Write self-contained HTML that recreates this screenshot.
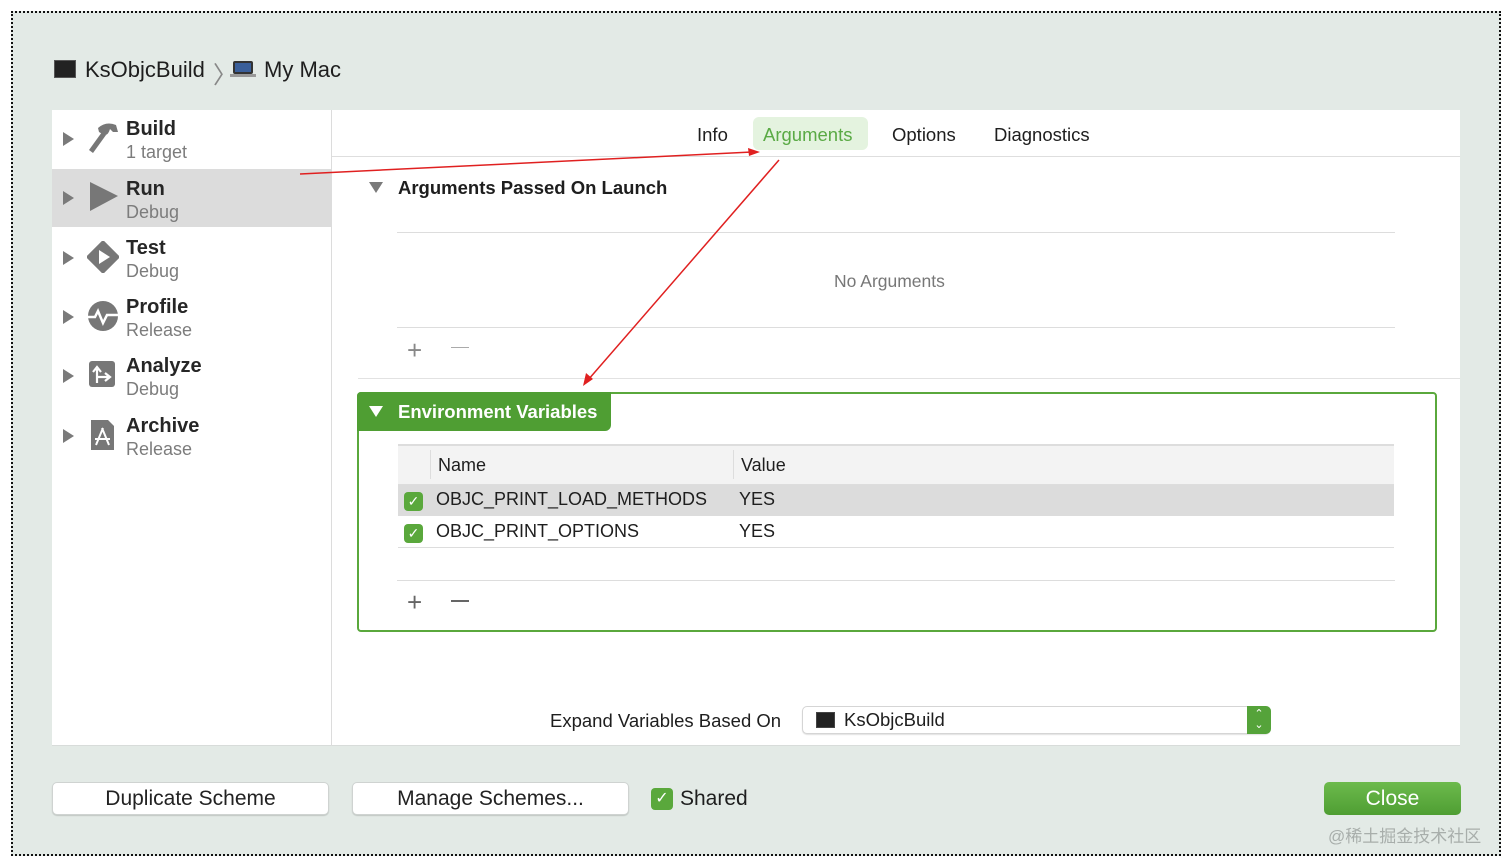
<!DOCTYPE html>
<html><head><meta charset="utf-8">
<style>
*{margin:0;padding:0;box-sizing:border-box}
body{width:1512px;height:866px;background:#fff;font-family:"Liberation Sans",sans-serif;position:relative;overflow:hidden;color:#222}
.a{position:absolute}
#outer{left:11px;top:11px;width:1490px;height:845px;border:2px dotted #111;background:#e3eae6}
.t{font-size:19px;color:#1e1e1e;white-space:nowrap}
.side-title{font-size:20px;font-weight:bold;color:#262626}
.side-sub{font-size:18px;color:#7c7c7c}
.tri{width:0;height:0;border-top:7px solid transparent;border-bottom:7px solid transparent;border-left:11px solid #7a7a7a}
.btn{background:#fff;border:1px solid #cfd3d1;border-radius:5px;box-shadow:0 1px 1px rgba(0,0,0,.15);font-size:21px;text-align:center;color:#222}
.chk{width:19px;height:19px;border-radius:4px;background:#5aa83c;color:#fff;font-size:14px;text-align:center;line-height:19px}
</style></head><body>
<div class="a" id="outer"></div>
<!-- header -->
<div class="a" style="left:54px;top:60px;width:22px;height:18px;background:#222;border:1px solid #555"></div>
<div class="a t" style="left:85px;top:57px;font-size:22px">KsObjcBuild</div>
<div class="a" style="left:213px;top:55px;font-size:24px;color:#888">〉</div>
<div class="a" style="left:233px;top:61px;width:20px;height:13px;background:#3a5f9a;border:2px solid #333;border-radius:2px"></div>
<div class="a" style="left:230px;top:74px;width:26px;height:3px;background:#999"></div>
<div class="a t" style="left:264px;top:57px;font-size:22px">My Mac</div>
<!-- panel -->
<div class="a" style="left:52px;top:110px;width:1408px;height:636px;background:#fff;border-bottom:1px solid #d8dcda"></div>
<div class="a" style="left:331px;top:110px;width:1px;height:636px;background:#dcdcdc"></div>
<div class="a" style="left:52px;top:169px;width:279px;height:58px;background:#dcdcdc"></div>
<div class="a" style="left:332px;top:156px;width:1128px;height:1px;background:#dedede"></div>
<!-- sidebar -->
<div class="a tri" style="left:63px;top:132px"></div>
<svg class="a" style="left:86px;top:120px" width="34" height="34" viewBox="0 0 34 34"><path d="M3 30 L16 12 L20 15 L7 33Z" fill="#777"/><path d="M12 8 Q20 1 30 5 L32 12 L27 12 L24 9 Q22 16 18 15 L13 12Z" fill="#777"/></svg>
<div class="a side-title" style="left:126px;top:118px">Build</div><div class="a side-sub" style="left:126px;top:142px">1 target</div>
<div class="a tri" style="left:63px;top:191px"></div>
<svg class="a" style="left:89px;top:181px" width="30" height="32"><path d="M1 1 L29 15 L1 30Z" fill="#777"/></svg>
<div class="a side-title" style="left:126px;top:178px">Run</div><div class="a side-sub" style="left:126px;top:202px">Debug</div>
<div class="a tri" style="left:63px;top:251px"></div>
<svg class="a" style="left:87px;top:241px" width="32" height="32"><path d="M16 1 L31 16 L16 31 L1 16Z" fill="#777" stroke="#777" stroke-width="3" stroke-linejoin="round"/><path d="M12 9 L23 16 L12 23Z" fill="#fff"/></svg>
<div class="a side-title" style="left:126px;top:237px">Test</div><div class="a side-sub" style="left:126px;top:261px">Debug</div>
<div class="a tri" style="left:63px;top:310px"></div>
<svg class="a" style="left:87px;top:300px" width="32" height="32"><circle cx="16" cy="16" r="15" fill="#777"/><path d="M1 17 L8 17 L11 11 L16 23 L20 15 L31 15" fill="none" stroke="#fff" stroke-width="2.5"/></svg>
<div class="a side-title" style="left:126px;top:296px">Profile</div><div class="a side-sub" style="left:126px;top:320px">Release</div>
<div class="a tri" style="left:63px;top:369px"></div>
<svg class="a" style="left:89px;top:361px" width="28" height="28"><rect width="26" height="26" rx="3" fill="#777"/><path d="M8 22 L8 8 M4 11 L8 6 L12 11 M8 16 L19 16 M16 12 L21 16 L16 20" fill="none" stroke="#fff" stroke-width="2.2"/></svg>
<div class="a side-title" style="left:126px;top:355px">Analyze</div><div class="a side-sub" style="left:126px;top:379px">Debug</div>
<div class="a tri" style="left:63px;top:429px"></div>
<svg class="a" style="left:90px;top:419px" width="26" height="32"><path d="M1 1 L18 1 L24 7 L24 31 L1 31Z" fill="#777"/><path d="M6 26 L13 9 M19 26 L12 9 M5 20 L20 20" stroke="#fff" stroke-width="2"/></svg>
<div class="a side-title" style="left:126px;top:415px">Archive</div><div class="a side-sub" style="left:126px;top:439px">Release</div>
<!-- tabs -->
<div class="a t" style="left:697px;top:124px;font-size:18.5px">Info</div>
<div class="a" style="left:753px;top:117px;width:115px;height:33px;background:#e4f3df;border-radius:6px"></div>
<div class="a t" style="left:763px;top:124px;font-size:18.5px;color:#5aaa45">Arguments</div>
<div class="a t" style="left:892px;top:124px;font-size:18.5px">Options</div>
<div class="a t" style="left:994px;top:124px;font-size:18.5px">Diagnostics</div>
<!-- args -->
<div class="a" style="left:369px;top:182px;width:0;height:0;border-left:7px solid transparent;border-right:7px solid transparent;border-top:11px solid #7a7a7a"></div>
<div class="a t" style="left:398px;top:177px;font-size:18.5px;font-weight:bold">Arguments Passed On Launch</div>
<div class="a" style="left:397px;top:232px;width:998px;height:1px;background:#ddd"></div>
<div class="a t" style="left:834px;top:271px;font-size:17.5px;color:#777">No Arguments</div>
<div class="a" style="left:397px;top:327px;width:998px;height:1px;background:#ddd"></div>
<div class="a" style="left:407px;top:335px;font-size:26px;color:#888;font-weight:200">+</div>
<div class="a" style="left:451px;top:347px;width:18px;height:1px;background:#aaa"></div>
<div class="a" style="left:358px;top:378px;width:1102px;height:1px;background:#e2e2e2"></div>
<!-- env box -->
<div class="a" style="left:357px;top:392px;width:1080px;height:240px;border:2px solid #5aa83c;border-radius:4px"></div>
<div class="a" style="left:357px;top:392px;width:254px;height:39px;background:#4f9e33;border-radius:4px 0 6px 0"></div>
<div class="a" style="left:369px;top:406px;width:0;height:0;border-left:7px solid transparent;border-right:7px solid transparent;border-top:11px solid #fff"></div>
<div class="a t" style="left:398px;top:401px;font-size:18.5px;font-weight:bold;color:#fff">Environment Variables</div>
<div class="a" style="left:398px;top:444px;width:996px;height:41px;background:#f3f3f3;border-top:2px solid #ddd;border-bottom:1px solid #ddd"></div>
<div class="a" style="left:430px;top:450px;width:1px;height:29px;background:#ddd"></div>
<div class="a" style="left:733px;top:450px;width:1px;height:29px;background:#ddd"></div>
<div class="a t" style="left:438px;top:455px;font-size:18px">Name</div>
<div class="a t" style="left:741px;top:455px;font-size:18px">Value</div>
<div class="a" style="left:398px;top:485px;width:996px;height:31px;background:#dcdcdc"></div>
<div class="a chk" style="left:404px;top:492px">✓</div>
<div class="a t" style="left:436px;top:489px;font-size:18px">OBJC_PRINT_LOAD_METHODS</div>
<div class="a t" style="left:739px;top:489px;font-size:18px">YES</div>
<div class="a chk" style="left:404px;top:524px">✓</div>
<div class="a t" style="left:436px;top:521px;font-size:18px">OBJC_PRINT_OPTIONS</div>
<div class="a t" style="left:739px;top:521px;font-size:18px">YES</div>
<div class="a" style="left:398px;top:547px;width:996px;height:1px;background:#ddd"></div>
<div class="a" style="left:397px;top:580px;width:998px;height:1px;background:#ddd"></div>
<div class="a" style="left:407px;top:587px;font-size:26px;color:#666;font-weight:200">+</div>
<div class="a" style="left:451px;top:600px;width:18px;height:1.5px;background:#666"></div>
<!-- expand -->
<div class="a t" style="left:550px;top:710px;font-size:18.5px">Expand Variables Based On</div>
<div class="a" style="left:802px;top:706px;width:468px;height:28px;background:#fff;border:1px solid #d5d5d5;border-radius:5px;box-shadow:0 1px 1px rgba(0,0,0,.12)"></div>
<div class="a" style="left:816px;top:712px;width:19px;height:16px;background:#222;border:1px solid #444"></div>
<div class="a t" style="left:844px;top:709px;font-size:18.5px">KsObjcBuild</div>
<div class="a" style="left:1247px;top:706px;width:24px;height:28px;background:#55a33a;border-radius:0 5px 5px 0;color:#fff;font-size:11px;text-align:center;line-height:11px;padding-top:3px">⌃<br>⌄</div>
<!-- bottom -->
<div class="a btn" style="left:52px;top:782px;width:277px;height:33px;line-height:31px">Duplicate Scheme</div>
<div class="a btn" style="left:352px;top:782px;width:277px;height:33px;line-height:31px">Manage Schemes...</div>
<div class="a chk" style="left:651px;top:788px;width:22px;height:22px;line-height:22px;font-size:16px">✓</div>
<div class="a t" style="left:680px;top:787px;font-size:21px">Shared</div>
<div class="a" style="left:1324px;top:782px;width:137px;height:33px;background:linear-gradient(#6cba4c,#4f9e33);border-radius:5px;color:#fff;font-size:21px;text-align:center;line-height:33px">Close</div>
<div class="a" style="left:1328px;top:822px;font-size:17px;color:#a8aeab;font-family:'Liberation Sans','Noto Sans CJK SC',sans-serif">@稀土掘金技术社区</div>
<!-- red arrows -->
<svg class="a" style="left:0;top:0" width="1512" height="866">
<line x1="300" y1="174" x2="752" y2="152" stroke="#e02020" stroke-width="1.5"/>
<path d="M760 152 L748 148 L749 156Z" fill="#e02020"/>
<line x1="779" y1="160" x2="588" y2="380" stroke="#e02020" stroke-width="1.5"/>
<path d="M583 386 L586 373 L593 379Z" fill="#e02020"/>
</svg>
</body></html>
